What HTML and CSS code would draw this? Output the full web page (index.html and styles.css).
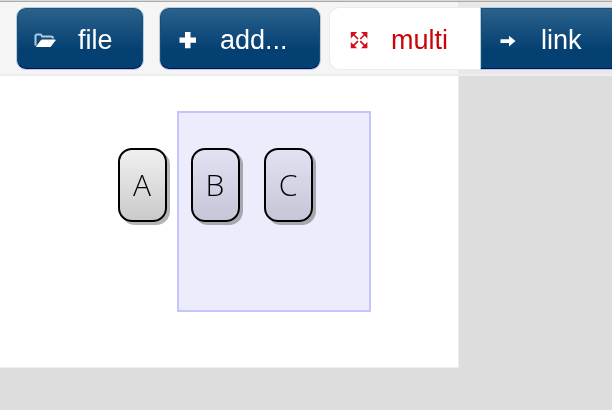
FILE: index.html
```html
<!DOCTYPE html>
<html lang="en">
<head>
<meta charset="utf-8">
<title>Graph editor</title>
<link rel="stylesheet" href="styles.css">
</head>
<body>
<header class="toolbar">
  <button class="btn file"><svg class="icon" viewBox="0 0 24 24"><path d="M2.500 17.500V8Q2.500 6.500 4 6.500H7.500Q8.500 6.500 9 8.500H18Q20 8.500 20 10.500" fill="none" stroke="#b5c9dc" stroke-width="2"/><path d="M3.500 18.500L8.500 12H22.300L17.500 18.500Z" fill="#fff" stroke="#fff"/></svg><span>file</span></button>
  <button class="btn add"><svg class="icon" viewBox="0 0 24 24"><path d="M9 4H14.500V9.500H20V14.800H14.500V20.300H9V14.800H3.500V9.500H9Z" fill="#fff"/></svg><span>add...</span></button>
  <div class="group">
    <button class="btn multi"><svg class="icon" viewBox="0 0 24 24"><path d="M3.800 4H10.200L3.800 10.400ZM14 4H20.400V10.400ZM3.800 13.900L10.200 20.300H3.800ZM20.400 13.900V20.300H14Z" fill="#d0101c"/><path d="M6 6L11 11M18.200 6L13.200 11M6 18.200L11 13.200M18.200 18.200L13.200 13.200" stroke="#d0101c" stroke-width="1.700"/></svg><span>multi</span></button>
    <button class="btn link"><svg class="icon" viewBox="0 0 24 24"><path d="M4.500 11.200H13V7.700L19.500 13L13 18.500V15H4.500Z" fill="#fff"/></svg><span>link</span></button>
  </div>
</header>
<main class="canvas">
  <div class="node a">A</div>
  <div class="node b">B</div>
  <div class="node c">C</div>
  <div class="selection"></div>
</main>
</body>
</html>
```
FILE: styles.css
```css
* { box-sizing: border-box; }
body {
  margin: 0;
  width: 612px;
  height: 410px;
  overflow: hidden;
  background: #ddd;
  font-family: "Liberation Sans", Arial, sans-serif;
}
.toolbar {
  display: flex;
  align-items: flex-start;
  width: 612px;
  height: 76px;
  padding: 6px 0 0 16px;
  overflow: hidden;
  border-top: 1px solid #d8d8d6;
  border-bottom: 2px solid #ededed;
  background: linear-gradient(90deg, #f5f5f5 458px, #e8e8e8 458px);
  box-shadow: inset 0 1px #aaa;
}
.btn {
  display: flex;
  align-items: center;
  flex: none;
  height: 63px;
  margin: 0;
  padding: 0 0 0 16px;
  border: 1px solid #bccad5;
  border-radius: 10px;
  background: linear-gradient(#2c628c, #044072 68%) padding-box;
  box-shadow: inset 0 -1px #000d70, inset 0 1px #115687, inset 1px 0 #115080, inset -1px 0 #115080;
  color: #fff;
  font: 27px/1 "Liberation Sans", Arial, sans-serif;
  text-align: left;
}
.icon {
  flex: none;
  width: 24px;
  height: 24px;
  margin-top: 3px;
}
.btn span { margin: 4px 0 0 21px; }
.file { width: 128px; }
.add { width: 162px; margin-left: 15px; }
.add span { margin-left: 20px; }
.group { display: flex; flex: none; margin-left: 8px; }
.multi {
  width: 151px;
  border: 1px solid #ebebeb;
  border-right: 0;
  border-radius: 10px 0 0 10px;
  background: #fff;
  box-shadow: none;
  color: #cc0408;
}
.multi .icon { margin-left: 1px; }
.multi span { margin-left: 20px; }
.link { width: 140px; border-radius: 0; padding-left: 15px; }
.link span { margin-left: 21px; }
.canvas {
  position: relative;
  width: 459px;
  height: 292px;
  border-right: 1px solid #eee;
  border-bottom: 1px solid #eee;
  background: #fff;
}
.node {
  position: absolute;
  top: 72px;
  width: 49px;
  height: 74px;
  border: 2px solid #000;
  border-radius: 14px;
  background: linear-gradient(#f0f0f0, #cacaca);
  box-shadow: 3px 3px 0 #b5b5b1;
  color: #000;
  font: 300 30px/69px "Open Sans", sans-serif;
  text-align: center;
  text-indent: -1px;
}
.b, .c {
  background: linear-gradient(#f2f4f4, #d4d6d9);
}
.a { left: 118px; }
.b { left: 191px; }
.c { left: 264px; }
.selection {
  position: absolute;
  top: 35px;
  left: 177px;
  width: 194px;
  height: 201px;
  border: 2px solid #c4c5fa;
  background: #edecfd;
  mix-blend-mode: multiply;
}
```
